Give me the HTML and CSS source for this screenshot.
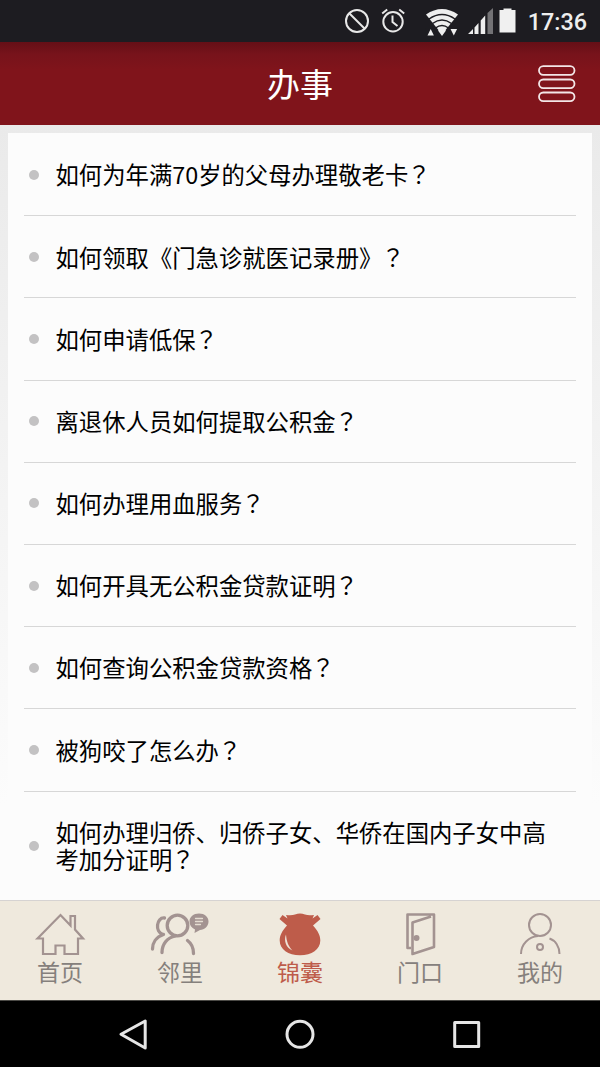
FILE: index.html
```html
<!DOCTYPE html>
<html lang="zh-CN">
<head>
    <meta charset="UTF-8">
    <meta name="viewport" content="width=device-width, initial-scale=1.0">
    <title>办事</title>
    <link rel="stylesheet" href="styles.css">
</head>
<body>
    <div class="status-bar">
        <svg class="status-icons" width="192" height="42" viewBox="330 0 192 42">
            <g fill="none" stroke="#e8e8e8" stroke-width="2">
                <circle cx="357" cy="21" r="11"/>
                <path d="M349 13l16 16"/>
                <circle cx="393" cy="21.800" r="9.700"/>
                <path d="M392.500 15.500v6.500l5 4M382.200 13.500l5-4M404.200 13.500l-5-4"/>
            </g>
            <path d="M426 14.500q16-11 32 0l-16 20z" fill="#eee"/>
            <path d="M429 19q13-9 26 0M432.500 23.500q9.500-7 19 0M435.500 28q6.500-5 13 0" fill="none" stroke="#1d1c21" stroke-width="1.500"/>
            <path d="M425.500 28h10l2 8h-12zM458.500 28h-10l-2 8h12z" fill="#1d1c21"/>
            <path d="M427.500 35.500l3.200-6.500 3.200 6.500zM450.500 29h6.600l-3.300 6.500zM438 30.500q4-3 8 0l-4 5.500z" fill="#eee"/>
            <path d="M468 34l5-5v5zM474.500 27.500l4-4.500V34h-4zM480.700 20.500l4.500-5V34h-4.500z" fill="#eee"/>
            <path d="M487.500 13l5.500-5v26h-5.500z" fill="#737275"/>
            <path d="M503.500 8.500h8V10h4v22.500h-16V10h4z" fill="#f0f0f0"/>
        </svg>
        <span class="clock">17:36</span>
    </div>

    <header>
        <h1>办事</h1>
        <svg class="menu-icon" width="38" height="38" viewBox="0 0 38 38" fill="none" stroke="#f3e6e7" stroke-width="1.800">
            <rect x="1" y="1.200" width="35.500" height="8.600" rx="4.300"/>
            <rect x="1" y="14.500" width="35.500" height="8.600" rx="4.300"/>
            <rect x="1" y="27.500" width="35.500" height="8.600" rx="4.300"/>
        </svg>
    </header>

    <main>
        <ul class="question-list">
            <li><p>如何为年满70岁的父母办理敬老卡<span class="mark" lang="zh-TW">？</span></p></li>
            <li><p>如何领取《门急诊就医记录册》<span class="mark" lang="zh-TW">？</span></p></li>
            <li><p>如何申请低保<span class="mark" lang="zh-TW">？</span></p></li>
            <li><p>离退休人员如何提取公积金<span class="mark" lang="zh-TW">？</span></p></li>
            <li><p>如何办理用血服务<span class="mark" lang="zh-TW">？</span></p></li>
            <li><p>如何开具无公积金贷款证明<span class="mark" lang="zh-TW">？</span></p></li>
            <li><p>如何查询公积金贷款资格<span class="mark" lang="zh-TW">？</span></p></li>
            <li><p>被狗咬了怎么办<span class="mark" lang="zh-TW">？</span></p></li>
            <li><p>如何办理归侨、归侨子女、华侨在国内子女中高考加分证明<span class="mark" lang="zh-TW">？</span></p></li>
        </ul>
    </main>

    <nav class="tab-bar">
        <a class="tab">
            <svg width="60" height="46" viewBox="30 912 60 46" fill="none" stroke="#a39391" stroke-width="2.200">
                <path d="M37.500 938.500L60.500 915l10 10.500V916h4.500v13.500l8 9H78V954H64.500v-8.500h-9V954H43v-15.500z"/>
            </svg>
            <span>首页</span>
        </a>
        <a class="tab">
            <svg width="60" height="46" viewBox="150 912 60 46" fill="none" stroke="#a39391" stroke-width="3.300" stroke-linecap="round">
                <circle cx="177.500" cy="925.500" r="10.300"/>
                <path d="M162 952.500c0-8 5-15 13.500-16.500M187.500 940.500c4 3 6 7 6 13M164.500 918c-8-1-10 14-1.500 16.500M152.500 949c0-6 3.500-12 11-14.500"/>
                <path d="M199 913.500c5.500 0 9.500 3.500 9.500 8 0 5-4 8-8.500 8.500l-5.500 3 .500-3.500c-3.500-1.500-5.500-4.500-5.500-8 0-4.500 4-8 9.500-8z" fill="#a39391" stroke="none"/>
                <path d="M195.500 918.500h7M195.500 921.500h7M195.500 924.500h5" stroke="#e5ddd2" stroke-width="1.300"/>
            </svg>
            <span>邻里</span>
        </a>
        <a class="tab active">
            <svg width="60" height="46" viewBox="270 912 60 46" fill="#be5c4a">
                <path d="M286 915c4 .500 7 .300 9-.500 3.500-1.300 6.500-1.300 10 0 2 .800 5 1 9 .500l-1.500 3.500 5-3.500 3 4-7.500 6.500c5 5.500 7.300 10 7.300 15 0 9-8.500 14.700-20.300 14.700s-20.300-5.700-20.300-14.700c0-5 2.300-9.500 7.300-15l-7.500-6.500 3-4 5 3.500z"/>
                <path d="M286 934.500c-2.500 6 0 13.500 6.500 16-4-4-6-9-6.500-16z" fill="#efe4d8"/>
            </svg>
            <span>锦囊</span>
        </a>
        <a class="tab">
            <svg width="60" height="46" viewBox="390 912 60 46" fill="none" stroke="#a39391" stroke-width="2.600" stroke-linejoin="round">
                <path d="M411 948h-3.500v-33.500H434V947l-21.500 7v-31.500l18.500-6"/>
                <circle cx="416.500" cy="938" r="3" fill="#a39391" stroke="none"/>
            </svg>
            <span>门口</span>
        </a>
        <a class="tab">
            <svg width="60" height="46" viewBox="510 912 60 46" fill="none" stroke="#a39391" stroke-width="2">
                <circle cx="540" cy="925" r="11"/>
                <path d="M521 954c0-10 8-17.500 17-18M549.500 938.500c6 2 10 8 10 15.500"/>
                <circle cx="540" cy="947" r="3"/>
            </svg>
            <span>我的</span>
        </a>
    </nav>

    <div class="system-nav">
        <svg width="600" height="66" viewBox="0 1001 600 66" fill="none" stroke="#e6e6e6" stroke-width="3" stroke-linejoin="round">
            <path d="M145.200 1021v27L121 1034.300z"/>
            <circle cx="300" cy="1034.300" r="13"/>
            <path d="M454.700 1022.500h24v24h-24z"/>
        </svg>
    </div>
</body>
</html>
```
FILE: styles.css
```css
* {
    box-sizing: border-box;
}

body {
    font-family: 'Noto Sans CJK SC', sans-serif;
    margin: 0;
    height: 1067px;
    display: flex;
    flex-direction: column;
    background-color: #fcfcfc;
    overflow: hidden;
}

.status-bar {
    height: 42px;
    background-color: #1d1c21;
    color: #eee;
    display: flex;
    align-items: center;
    justify-content: flex-end;
    gap: 6px;
    padding-right: 13px;
}

.clock {
    font-family: Roboto, sans-serif;
    font-size: 23.4px;
    font-weight: 500;
    line-height: 42px;
    padding-top: 2px;
}

header {
    height: 83px;
    background: linear-gradient(#650f16, #77131b 12px, #80141b 28px, #80141b);
    color: #fff;
    display: grid;
    grid-template-columns: 1fr auto 1fr;
    align-items: center;
    padding: 0 24px;
}

h1 {
    grid-column: 2;
    margin: 0;
    padding-bottom: 1px;
    font-size: 33px;
    font-weight: 400;
    line-height: 40px;
}

.menu-icon {
    justify-self: end;
}

main {
    height: 775px;
    padding: 8px 8px 0;
    background: linear-gradient(#eaeaea, #fcfcfc 680px);
}

.question-list {
    list-style: none;
    margin: 0;
    padding: 1px 16px 0;
    height: 767px;
    background-color: #fcfcfc;
}

.question-list li {
    height: 82.2px;
    display: flex;
    align-items: center;
    gap: 17px;
    padding: 0 20px 0 5px;
    border-bottom: 1px solid #d7d7d7;
}

.question-list li::before {
    content: '';
    flex: none;
    width: 10px;
    height: 10px;
    border-radius: 50%;
    background-color: #c3c2c3;
}

.question-list li:last-child {
    height: 108px;
    border-bottom: none;
}

.question-list p {
    margin: 0 0 0 -0.5px;
    padding-top: 1px;
    color: #000;
    font-size: 23.35px;
    line-height: 27.5px;
}

/* full-width question mark centred in its box */
.question-list .mark {
    font-family: 'Noto Sans CJK TC', sans-serif;
    line-height: 0;
    margin-left: -1px;
}

.tab-bar {
    height: 101px;
    display: grid;
    grid-template-columns: repeat(5, 1fr);
    background-color: #efe9dd;
    border-top: 1px solid #d6d3d2;
    border-bottom: 1px solid #4b4a46;
}

.tab {
    display: flex;
    flex-direction: column;
    align-items: center;
    padding-top: 11px;
    color: #85807c;
    font-size: 23px;
    line-height: 26px;
}

.tab.active {
    color: #be5c4a;
}

.system-nav {
    height: 66px;
    background-color: #000;
}
```
